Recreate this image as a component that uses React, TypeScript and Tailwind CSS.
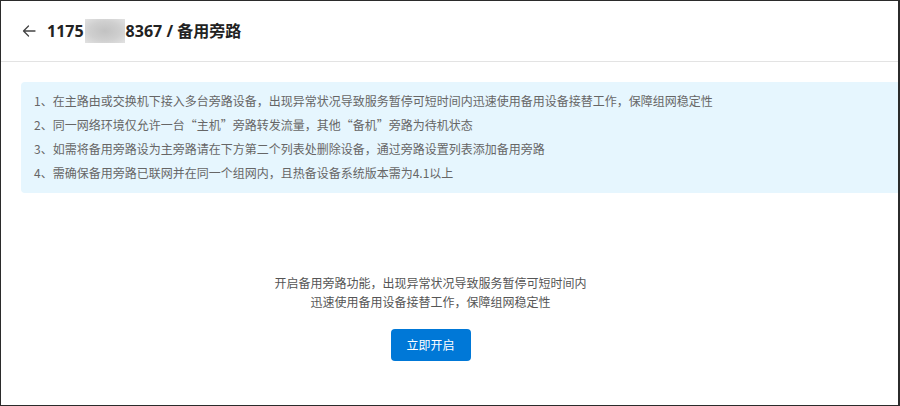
import React from 'react';

const tips = [
  '1、在主路由或交换机下接入多台旁路设备，出现异常状况导致服务暂停可短时间内迅速使用备用设备接替工作，保障组网稳定性',
  '2、同一网络环境仅允许一台“主机”旁路转发流量，其他“备机”旁路为待机状态',
  '3、如需将备用旁路设为主旁路请在下方第二个列表处删除设备，通过旁路设置列表添加备用旁路',
  '4、需确保备用旁路已联网并在同一个组网内，且热备设备系统版本需为4.1以上',
];

const font = { fontFamily: '"Noto Sans", "Noto Sans CJK SC", sans-serif' };
const cjk = { fontFamily: '"Noto Sans CJK SC", "Noto Sans", sans-serif' };

export default function App() {
  return (
    <div
      className="w-[900px] h-[406px] bg-white border border-[#2b2b2b] border-r-2 flex flex-col overflow-hidden"
      style={font}
    >
      {/* Header */}
      <div className="h-[61px] shrink-0 border-b border-[#e3e3e3] flex items-center pl-[21px]">
        <svg width="14" height="12" viewBox="0 0 14 12" fill="none" className="text-[#444]">
          <path d="M13 6H1.5M6.5 1L1.5 6l5 5" stroke="currentColor" strokeWidth="1.3" strokeLinecap="round" strokeLinejoin="round" />
        </svg>
        <div className="ml-[11px] flex items-center text-[16px] font-bold text-[#222] leading-none">
          <span>1175</span>
          <span className="w-[40px] h-[24px] mx-[1px] bg-[radial-gradient(ellipse_at_center,#c2c2c2_0%,#cfcfcf_55%,#e2e2e2_100%)]" />
          <span>8367 / 备用旁路</span>
        </div>
      </div>

      {/* Tips */}
      <div className="mt-[20px] ml-[20px] rounded-l-[4px] bg-[#e6f6fe] pt-[7px] pb-[8px] pl-[13px]" style={cjk}>
        {tips.map((t) => (
          <p key={t} className="text-[12px] leading-[24px] text-[#666]">
            {t}
          </p>
        ))}
      </div>

      {/* Empty state */}
      <div className="mt-[80px] pr-[38px] flex flex-col items-center">
        <p className="text-[12px] leading-[19px] text-[#555] text-center" style={cjk}>
          开启备用旁路功能，出现异常状况导致服务暂停可短时间内
          <br />
          迅速使用备用设备接替工作，保障组网稳定性
        </p>
        <button className="mt-[18px] w-[80px] h-[32px] rounded-[4px] bg-[#0078d7] text-white text-[12px] leading-none" style={cjk}>
          立即开启
        </button>
      </div>
    </div>
  );
}
